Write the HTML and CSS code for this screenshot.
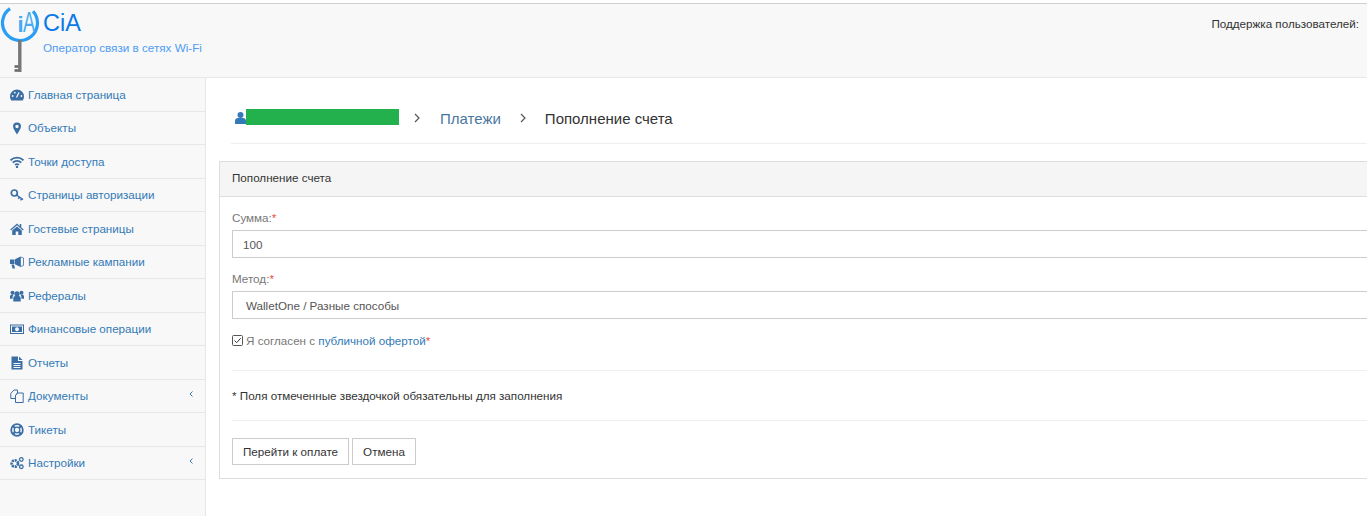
FILE: index.html
```html
<!DOCTYPE html>
<html lang="ru">
<head>
<meta charset="utf-8">
<title>CiA</title>
<link rel="stylesheet" href="styles.css">
</head>
<body>
<header class="header">
  <div class="brand">
    <svg class="logo" width="42" height="72" viewBox="0 0 42 72">
      <path d="M10 4.600A17.500 17.500 0 1 0 33 7.300" fill="none" stroke="#2a9df4" stroke-width="3.200"/>
      <text transform="translate(17.500 28)" class="logo-i">i</text>
      <text transform="translate(23 28) scale(.6 1)" class="logo-a">A</text>
      <path d="M19.800 36V68" stroke="#777" stroke-width="3.400"/>
      <path d="M14.500 62.500h4M14.500 66.500h4" stroke="#666" stroke-width="2.600"/>
    </svg>
    <div class="brand-text">
      <div class="brand-name">CiA</div>
      <div class="brand-sub">Оператор связи в сетях Wi-Fi</div>
    </div>
  </div>
  <div class="support">Поддержка пользователей:</div>
</header>
<div class="layout">
  <nav class="sidebar">
    <a class="nav-item"><svg class="ico" viewBox="0 0 14 14"><path d="M7 1.500a7 7 0 0 0-7 7c0 1.500.4 2.700 1.200 4h11.600c.8-1.300 1.200-2.500 1.200-4a7 7 0 0 0-7-7z"/><path d="M6.500 9.500l2.500-5" stroke="#f8f8f8" stroke-width="1.300"/><circle cx="2.600" cy="8" r=".9" fill="#f8f8f8"/><circle cx="11.400" cy="8" r=".9" fill="#f8f8f8"/><circle cx="4.800" cy="4.600" r=".9" fill="#f8f8f8"/></svg><span>Главная страница</span></a>
    <a class="nav-item"><svg class="ico" viewBox="0 0 14 14"><path fill-rule="evenodd" d="M7 1.500a4 4 0 0 0-4 4c0 2 2.500 5.500 4 8 1.500-2.500 4-6 4-8a4 4 0 0 0-4-4zm0 2.300a1.700 1.700 0 1 1 0 3.400 1.700 1.700 0 0 1 0-3.400z"/></svg><span>Объекты</span></a>
    <a class="nav-item"><svg class="ico" viewBox="0 0 14 14"><path d="M.5 5.300a9.200 9.200 0 0 1 13 0M2.700 7.700a6 6 0 0 1 8.600 0M5 10a2.900 2.900 0 0 1 4 0" fill="none" stroke="currentColor" stroke-width="1.700"/><circle cx="7" cy="11.900" r="1.200"/></svg><span>Точки доступа</span></a>
    <a class="nav-item"><svg class="ico" viewBox="0 0 14 14"><circle cx="4.300" cy="5" r="3" fill="none" stroke="currentColor" stroke-width="1.700"/><path d="M6.500 7l6.500 4.500M9.500 9.200l-1.200 1.600M11.800 10.800l-1.200 1.600" fill="none" stroke="currentColor" stroke-width="1.500"/></svg><span>Страницы авторизации</span></a>
    <a class="nav-item"><svg class="ico" viewBox="0 0 14 14"><path d="M7 1.500L.3 7.500l.8.900L7 3.300l5.900 5.100.8-.9-2.400-2.100V2H9.700v2.200z"/><path d="M2.200 8.500L7 4.400l4.800 4.100V13H8.300V9.500H5.700V13H2.200z"/></svg><span>Гостевые страницы</span></a>
    <a class="nav-item"><svg class="ico" viewBox="0 0 14 14"><path d="M0 4.500h4v4.500H0zM4.500 4.500L10.500 1.500v10.500L4.500 9z"/><path d="M1.500 9.500h2.500l1 4H2.500z"/><path d="M10.500 2l3 1v7.500l-3 1z" fill="#f8f8f8" stroke="currentColor" stroke-width=".8"/></svg><span>Рекламные кампании</span></a>
    <a class="nav-item"><svg class="ico" viewBox="0 0 14 14"><circle cx="7" cy="4.800" r="2.600"/><circle cx="2.500" cy="3.800" r="2"/><circle cx="11.500" cy="3.800" r="2"/><path d="M3.300 12.500V9c0-1.100 1-2 2-2h3.400c1 0 2 .9 2 2v3.500zM0 9.800V7.300c0-.9.800-1.500 1.600-1.500h2.200c-.7.600-1.200 1.500-1.200 2.500v1.500zM14 9.800V7.300c0-.9-.8-1.500-1.600-1.500h-2.200c.7.600 1.200 1.500 1.200 2.500v1.500z"/></svg><span>Рефералы</span></a>
    <a class="nav-item"><svg class="ico" viewBox="0 0 14 14"><path fill-rule="evenodd" d="M0 2.500h14v9.500H0zM1 3.500v7.500h12V3.500z"/><path fill-rule="evenodd" d="M2 4.500h10v5.500H2zM7 5.300a2 2 0 1 0 0 4 2 2 0 0 0 0-4z"/></svg><span>Финансовые операции</span></a>
    <a class="nav-item"><svg class="ico" viewBox="0 0 14 14"><path fill-rule="evenodd" d="M1.500 .5h6.500v4.500h4.500v8.500h-11zM3.500 7v1h7V7zM3.500 9v1h7V9zM3.500 11v1h7v-1z"/><path d="M9 .5l3.500 3.500H9z"/></svg><span>Отчеты</span></a>
    <a class="nav-item"><svg class="ico" viewBox="0 0 14 14"><path d="M4 1h3.500v3L5.500 6.500v3H.8V4.500zM7.500 4H13.200v9.500H5.500V6.500z" fill="none" stroke="currentColor" stroke-width="1"/></svg><span>Документы</span><svg class="chev" width="4" height="6" viewBox="0 0 4 6"><path d="M3.500 .5L1 3l2.500 2.500" fill="none" stroke="currentColor" stroke-width="1"/></svg></a>
    <a class="nav-item"><svg class="ico" viewBox="0 0 14 14"><circle cx="7" cy="7" r="5.800" fill="none" stroke="currentColor" stroke-width="1.800"/><circle cx="7" cy="7" r="2.800" fill="none" stroke="currentColor" stroke-width="1.300"/><path d="M2.800 2.800l2.200 2.200M11.200 2.800L9 5M2.800 11.200L5 9M11.200 11.200L9 9" stroke="currentColor" stroke-width="2"/></svg><span>Тикеты</span></a>
    <a class="nav-item"><svg class="ico" viewBox="0 0 14 14"><circle cx="4.800" cy="7.500" r="3.200" fill="none" stroke="currentColor" stroke-width="2.600" stroke-dasharray="2.100 .8"/><circle cx="11.300" cy="3.500" r="1.800" fill="none" stroke="currentColor" stroke-width="1.300"/><circle cx="11.300" cy="10.800" r="1.800" fill="none" stroke="currentColor" stroke-width="1.300"/></svg><span>Настройки</span><svg class="chev" width="4" height="6" viewBox="0 0 4 6"><path d="M3.500 .5L1 3l2.500 2.500" fill="none" stroke="currentColor" stroke-width="1"/></svg></a>
  </nav>
  <main class="main">
    <div class="crumbs">
      <svg class="crumb-user" width="11" height="14" viewBox="0 0 11 14"><circle cx="5.500" cy="4" r="3"/><path d="M0 13V10c0-1.700 1.300-3 3-3h5c1.700 0 3 1.300 3 3v3z"/></svg>
      <div class="redact"></div>
      <svg class="crumb-sep" width="6" height="10" viewBox="0 0 6 10"><path d="M1 1l4 4-4 4" fill="none" stroke="currentColor" stroke-width="1.200"/></svg>
      <a class="crumb-link">Платежи</a>
      <svg class="crumb-sep crumb-sep-2" width="6" height="10" viewBox="0 0 6 10"><path d="M1 1l4 4-4 4" fill="none" stroke="currentColor" stroke-width="1.200"/></svg>
      <span class="crumb-current">Пополнение счета</span>
    </div>
    <section class="panel">
      <div class="panel-head">Пополнение счета</div>
      <form class="panel-body">
        <label class="field-label">Сумма:<span class="req">*</span></label>
        <div class="control control-input">100</div>
        <label class="field-label field-label-2">Метод:<span class="req">*</span></label>
        <div class="control control-select">WalletOne / Разные способы</div>
        <div class="agree">
          <svg class="check" width="11" height="11" viewBox="0 0 11 11"><rect x=".5" y=".5" width="10" height="10" rx="1" fill="#fff" stroke="#555"/><path d="M2.500 5.500l2.200 2.200 4-4.500" fill="none" stroke="#333" stroke-width="1"/></svg>
          <span>Я согласен с <a class="offer">публичной офертой</a><span class="req">*</span></span>
        </div>
        <div class="note">* Поля отмеченные звездочкой обязательны для заполнения</div>
        <div class="actions">
          <button type="button" class="btn btn-pay">Перейти к оплате</button>
          <button type="button" class="btn btn-cancel">Отмена</button>
        </div>
      </form>
    </section>
  </main>
</div>
</body>
</html>
```
FILE: styles.css
```css
* { box-sizing: border-box; }
html, body { margin: 0; padding: 0; height: 516px; overflow: hidden; background: #fff; }
body { font-family: "Liberation Sans", Arial, sans-serif; font-size: 11.650px; color: #333; }
a { text-decoration: none; }

.header {
  height: 75px;
  margin-top: 3px;
  background: #f8f8f8;
  border-top: 1px solid #d0d0d0;
  border-bottom: 1px solid #e7e7e7;
  display: flex;
  justify-content: space-between;
}
.brand { display: flex; align-items: flex-start; }
.logo { display: block; flex: none; }
.logo-i { font: bold 22px "Liberation Sans", sans-serif; fill: #45aaf2; }
.logo-a { font: 30px "Liberation Sans", sans-serif; fill: #45aaf2; }
.brand-text { margin-left: 1px; }
.brand-name { font-size: 23.500px; line-height: 28px; color: #0b79e8; margin-top: 5px; }
.brand-sub { font-size: 11.700px; line-height: 14px; color: #4d9cf5; margin-top: 4px; }
.support { line-height: 14px; margin: 13px 8px 0 0; color: #333; }

.layout { display: flex; height: 438px; }
.sidebar {
  width: 206px;
  flex: none;
  background: #f8f8f8;
  border-right: 1px solid #e7e7e7;
}
.nav-item {
  display: flex;
  align-items: center;
  height: 33.500px;
  padding: 1px 12px 0 10px;
  border-bottom: 1px solid #e7e7e7;
  color: #337ab7;
  line-height: 14px;
}
.ico { width: 14px; height: 14px; flex: none; margin-right: 4px; fill: currentColor; color: #3a6ea5; }
.chev { margin-left: auto; color: #337ab7; margin-top: -5px; }

.main { flex: 1; min-width: 0; padding: 14px 0 0 13px; }
.crumbs {
  display: flex;
  align-items: center;
  height: 52px;
  margin: 0 0 17px 12px;
  border-bottom: 1px solid #eee;
  font-size: 15px;
}
.crumb-user { fill: #337ab7; flex: none; margin: 0 0 0 4px; }
.redact { width: 153px; height: 16px; background: #22b14c; flex: none; margin-top: -2px; }
.crumb-sep { color: #555; flex: none; margin-left: 15px; }
.crumb-sep-2 { margin-left: 19px; }
.crumb-link { color: #4a76a0; margin: 2px 0 0 20px; }
.crumb-current { color: #333; margin: 2px 0 0 19px; }

.panel { border: 1px solid #ddd; border-right: 0; height: 318px; }
.panel-head {
  height: 35px;
  line-height: 31px;
  padding-left: 12px;
  background: #f5f5f5;
  border-bottom: 1px solid #ddd;
  color: #333;
}
.panel-body { padding: 14px 0 0 12px; }
.field-label { display: block; line-height: 14px; color: #777; margin-bottom: 5px; }
.field-label-2 { margin-top: 14px; }
.req { color: #e74c3c; }
.control {
  height: 28px;
  line-height: 28px;
  border: 1px solid #ccc;
  border-right: 0;
  color: #555;
  background: #fff;
}
.control-input { padding-left: 10px; }
.control-select { padding-left: 13px; }
.agree {
  display: flex;
  align-items: center;
  gap: 3px;
  height: 14px;
  margin-top: 14px;
  color: #777;
}
.check { flex: none; }
.offer { color: #337ab7; }
.note {
  margin-top: 23px;
  height: 51px;
  line-height: 49px;
  border-top: 1px solid #eee;
  border-bottom: 1px solid #eee;
  color: #333;
}
.actions { display: flex; gap: 3px; margin-top: 17px; }
.btn {
  height: 27px;
  padding: 0;
  font: 11.650px "Liberation Sans", Arial, sans-serif;
  color: #333;
  background: #fff;
  border: 1px solid #ccc;
}
.btn-pay { width: 117px; }
.btn-cancel { width: 64px; }
```
